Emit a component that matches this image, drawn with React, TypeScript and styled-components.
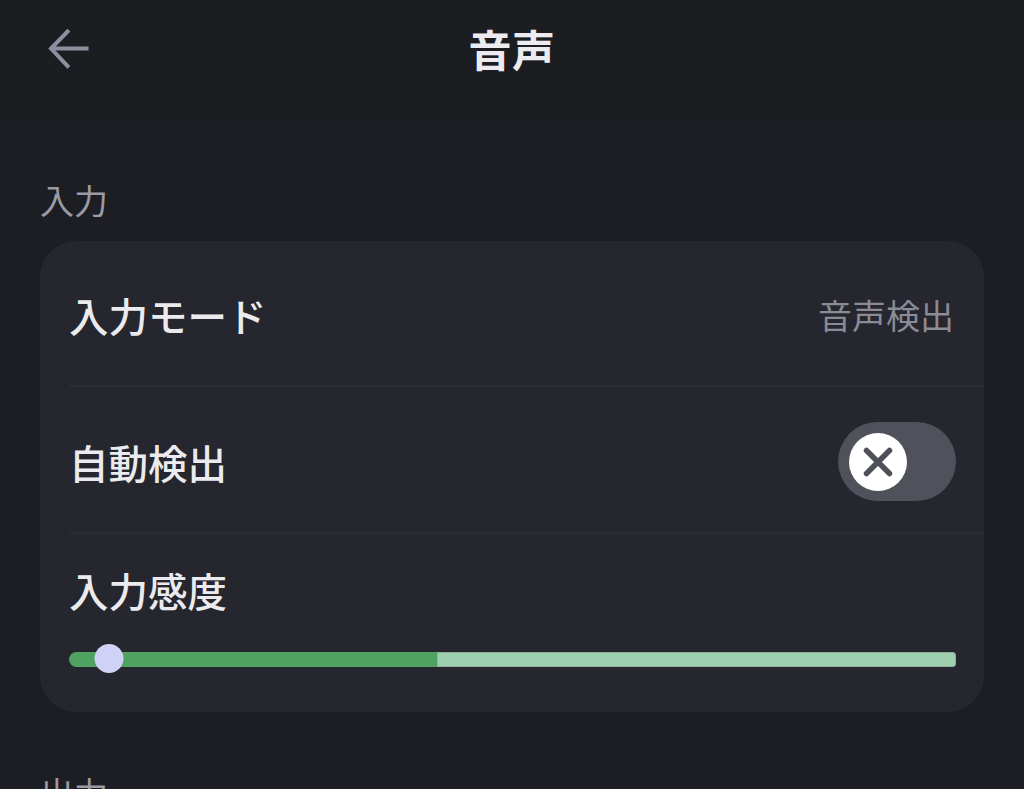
import React from "react";
import styled, { createGlobalStyle } from "styled-components";

const GlobalStyle = createGlobalStyle`
  html, body {
    margin: 0;
    padding: 0;
    background: #1d1e23;
  }
  body {
    font-family: "Noto Sans CJK JP", "Noto Sans", sans-serif;
    color: #e9e9ee;
  }
  * { box-sizing: border-box; }
`;

const Page = styled.div`
  width: 1024px;
  height: 789px;
  overflow: hidden;
  background: #1d1e23;
`;

const Header = styled.header`
  height: 117px;
  display: grid;
  grid-template-columns: 1fr auto 1fr;
  align-items: start;
  padding: 18px 47px 0;
  background: #1c1d21;
  border-bottom: 1px solid #1a1b1f;
`;

const BackButton = styled.button`
  justify-self: start;
  width: 44px;
  height: 40px;
  margin-top: 11px;
  padding: 0;
  border: none;
  background: transparent;
  display: flex;
  cursor: pointer;
`;

const Title = styled.h1`
  margin: 0;
  font-size: 43px;
  line-height: 60px;
  font-weight: 700;
  color: #ececf0;
  letter-spacing: 0.5px;
`;

const SectionLabel = styled.div<{ $top: number }>`
  margin: ${(p) => p.$top}px 0 0 40px;
  font-size: 34px;
  line-height: 38px;
  color: #9b9ba5;
`;

const Card = styled.section`
  margin: 22px 40px 0;
  background: #25262e;
  border-radius: 36px;
  overflow: hidden;
`;

const Row = styled.div<{ $divider?: boolean; $height: number }>`
  height: ${(p) => p.$height}px;
  margin-left: 29px;
  padding: 4px 28px 0 0;
  display: flex;
  align-items: center;
  justify-content: space-between;
  border-bottom: ${(p) => (p.$divider ? "2px solid #2d2e35" : "none")};
`;

const ColumnRow = styled.div`
  padding: 33px 28px 38px 29px;
  display: flex;
  flex-direction: column;
  gap: 31px;
`;

const RowLabel = styled.span`
  font-size: 39.5px;
  line-height: 46px;
  font-weight: 500;
  color: #ebebef;
`;

const RowValue = styled.span`
  font-size: 34px;
  line-height: 40px;
  color: #8b8b95;
  margin-right: 2px;
`;

const Toggle = styled.button`
  width: 118px;
  height: 79px;
  padding: 0 0 0 11px;
  border: none;
  border-radius: 40px;
  background: #50525b;
  display: flex;
  align-items: center;
  cursor: pointer;
`;

const Thumb = styled.span`
  width: 58px;
  height: 58px;
  border-radius: 50%;
  background: #ffffff;
  display: flex;
  align-items: center;
  justify-content: center;
`;

const Slider = styled.div`
  position: relative;
  height: 30px;
  display: flex;
  align-items: center;
`;

const TrackActive = styled.div`
  height: 15px;
  background: #4fa260;
  border-radius: 8px 0 0 8px;
`;

const TrackInactive = styled.div`
  flex: 1;
  height: 15px;
  background: #9ecfae;
  border-radius: 0 4px 4px 0;
  box-shadow: inset 0 0 0 1px rgba(120, 120, 130, 0.35);
`;

const SliderThumb = styled.span`
  position: absolute;
  top: 0;
  width: 29px;
  height: 29px;
  border-radius: 50%;
  background: #cfd1f7;
  transform: translateX(-50%);
`;

export default function App() {
  const activeWidth = 368;
  const thumbCenter = 39.5;
  return (
    <Page>
      <GlobalStyle />
      <Header>
        <BackButton aria-label="戻る">
          <svg width="44" height="40" viewBox="0 0 44 40" fill="none">
            <path d="M4 19.5 H41.5" stroke="#8e8f9e" strokeWidth="4" />
            <path d="M20.5 2.5 L4 19.5 L20.5 37" stroke="#8e8f9e" strokeWidth="4" strokeLinecap="square" strokeLinejoin="miter" />
          </svg>
        </BackButton>
        <Title>音声</Title>
        <span />
      </Header>

      <SectionLabel $top={64}>入力</SectionLabel>
      <Card>
        <Row $divider $height={146}>
          <RowLabel>入力モード</RowLabel>
          <RowValue>音声検出</RowValue>
        </Row>
        <Row $divider $height={147}>
          <RowLabel>自動検出</RowLabel>
          <Toggle aria-label="自動検出">
            <Thumb>
              <svg width="30" height="30" viewBox="0 0 30 30">
                <path d="M3.5 3.5 L26.5 26.5 M26.5 3.5 L3.5 26.5" stroke="#4f515a" strokeWidth="5.5" strokeLinecap="round" />
              </svg>
            </Thumb>
          </Toggle>
        </Row>
        <ColumnRow>
          <RowLabel>入力感度</RowLabel>
          <Slider>
            <TrackActive style={{ width: activeWidth }} />
            <TrackInactive />
            <SliderThumb style={{ left: thumbCenter }} />
          </Slider>
        </ColumnRow>
      </Card>
      <SectionLabel $top={62}>出力</SectionLabel>
    </Page>
  );
}
